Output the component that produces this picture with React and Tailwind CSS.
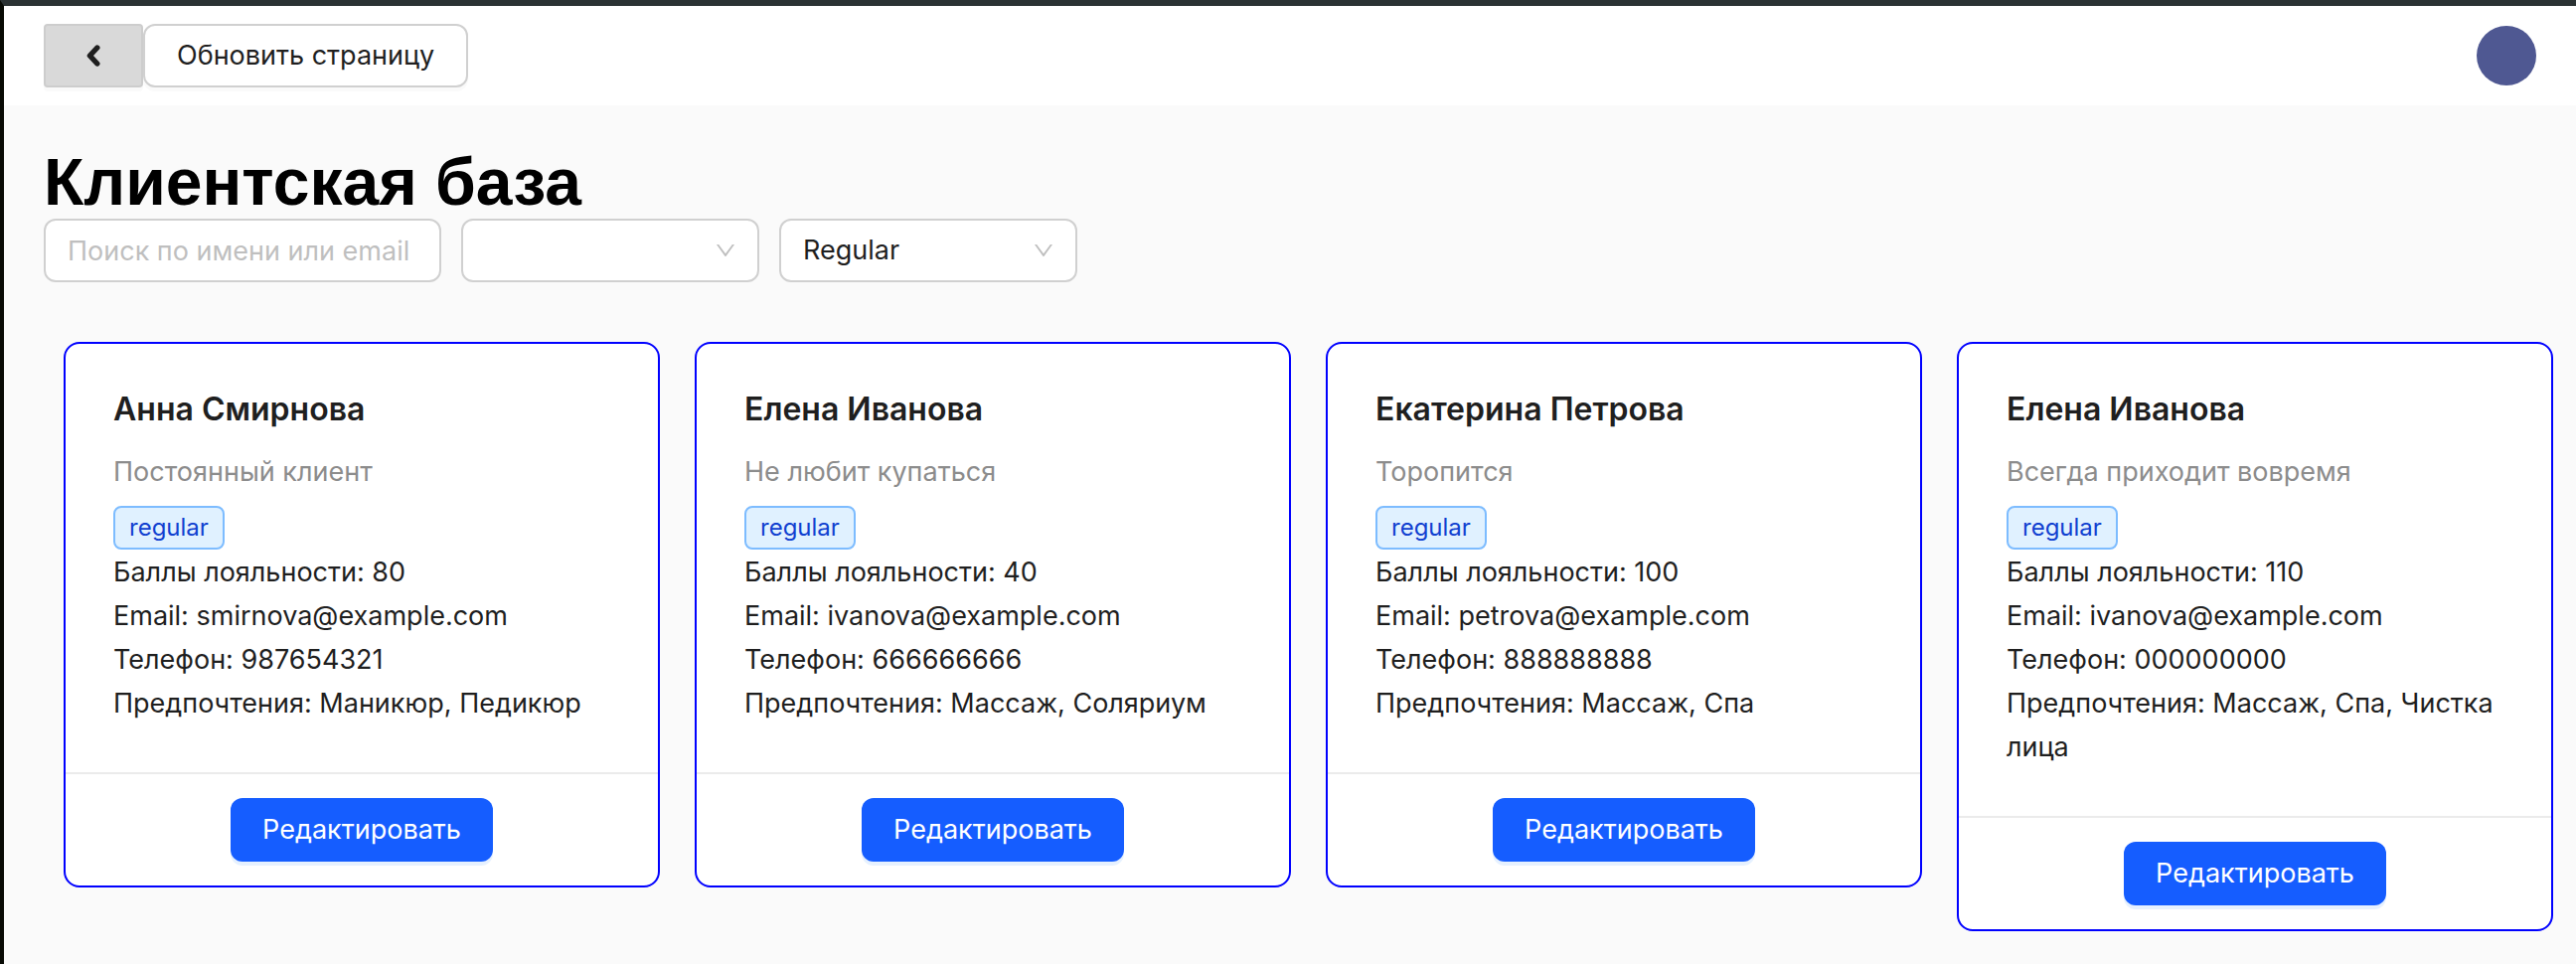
import { AiOutlineDown } from "react-icons/ai";

const clients = [
  { id: 1, name: "Анна Смирнова", note: "Постоянный клиент", points: 80, email: "smirnova@example.com", phone: "987654321", likes: "Маникюр, Педикюр" },
  { id: 2, name: "Елена Иванова", note: "Не любит купаться", points: 40, email: "ivanova@example.com", phone: "666666666", likes: "Массаж, Соляриум" },
  { id: 3, name: "Екатерина Петрова", note: "Торопится", points: 100, email: "petrova@example.com", phone: "888888888", likes: "Массаж, Спа" },
  { id: 4, name: "Елена Иванова", note: "Всегда приходит вовремя", points: 110, email: "ivanova@example.com", phone: "000000000", likes: "Массаж, Спа, Чистка лица" },
];

function FilterSelect({ label, value, options }) {
  return (
    <div className="relative w-[300px]">
      <select
        aria-label={label}
        defaultValue={value}
        className="h-16 w-full appearance-none rounded-xl border-2 border-[#d0d0d0] bg-white pl-[22px] pr-14"
      >
        {options.map((option) => (
          <option key={option} value={option}>{option}</option>
        ))}
      </select>
      <AiOutlineDown className="pointer-events-none absolute right-[22px] top-5 size-6 text-[#bfbfbf]" />
    </div>
  );
}

function ClientCard({ client }) {
  return (
    <article className="rounded-2xl border-2 border-[#0000ff] bg-white">
      <div className="px-12 pb-[47px] pt-12">
        <h2 className="mb-[23px] text-[32px] font-semibold leading-9">{client.name}</h2>
        <p className="text-[#8c8c8c]">{client.note}</p>
        <div className="mb-px mt-3 flex">
          <span className="flex h-11 items-center rounded-lg border-2 border-[#7dbcff] bg-[#e0f1ff] px-3.5 text-2xl text-[#1040d0]">
            regular
          </span>
        </div>
        <p>{`Баллы лояльности: ${client.points}`}</p>
        <p>{`Email: ${client.email}`}</p>
        <p>{`Телефон: ${client.phone}`}</p>
        <p>{`Предпочтения: ${client.likes}`}</p>
      </div>
      <div className="flex justify-center border-t-2 border-[#ebebeb] py-6">
        <button type="button" className="h-16 rounded-xl bg-[#155dff] px-8 text-white shadow-[0_4px_0_#e6f1ff]">
          Редактировать
        </button>
      </div>
    </article>
  );
}

export default function App() {
  return (
    <div className="min-h-screen border-l-4 border-t-6 border-l-[#080a04] border-t-[#2b3233] bg-[#fafafa] font-['Inter','Liberation_Sans',sans-serif] text-[27px] leading-11 text-[#1f1f1f]">
      <header className="flex h-25 items-center justify-between bg-white px-10">
        <div className="flex">
          <button
            type="button"
            aria-label="Назад"
            className="flex h-16 w-25 items-center justify-center rounded border-2 border-[#cdcdcd] bg-[#d9d9d9] shadow-[0_4px_0_#fafafa]"
          >
            <svg viewBox="0 0 14 22" className="h-[22px] w-3.5" fill="none" stroke="currentColor" strokeWidth="5.4" strokeLinecap="round" strokeLinejoin="round" aria-hidden="true">
              <path d="M10.8 3 3.4 11l7.4 8" />
            </svg>
          </button>
          <button type="button" className="h-16 rounded-xl border-2 border-[#d0d0d0] bg-white px-8 shadow-[0_4px_0_#fafafa]">
            Обновить страницу
          </button>
        </div>
        <button type="button" aria-label="Профиль" className="size-15 rounded-full bg-[#4f5892]" />
      </header>
      <main className="pb-8 pt-10">
        <h1 className="pl-10 font-['Liberation_Sans',Arial,sans-serif] text-[66px] font-bold leading-[74px] text-black">
          Клиентская база
        </h1>
        <div className="flex gap-5 pl-10">
          <input
            type="text"
            aria-label="Поиск"
            placeholder="Поиск по имени или email"
            className="h-16 w-100 rounded-xl border-2 border-[#d0d0d0] bg-white px-[22px] placeholder:text-[#bfbfbf]"
          />
          <FilterSelect label="Предпочтение" value="" options={["", "Массаж", "Маникюр"]} />
          <FilterSelect label="Статус" value="Regular" options={["Regular", "New"]} />
        </div>
        <section className="mt-15 grid grid-cols-4 items-start gap-[35px] pl-15 pr-[23px]">
          {clients.map((client) => (
            <ClientCard key={client.id} client={client} />
          ))}
        </section>
      </main>
    </div>
  );
}
